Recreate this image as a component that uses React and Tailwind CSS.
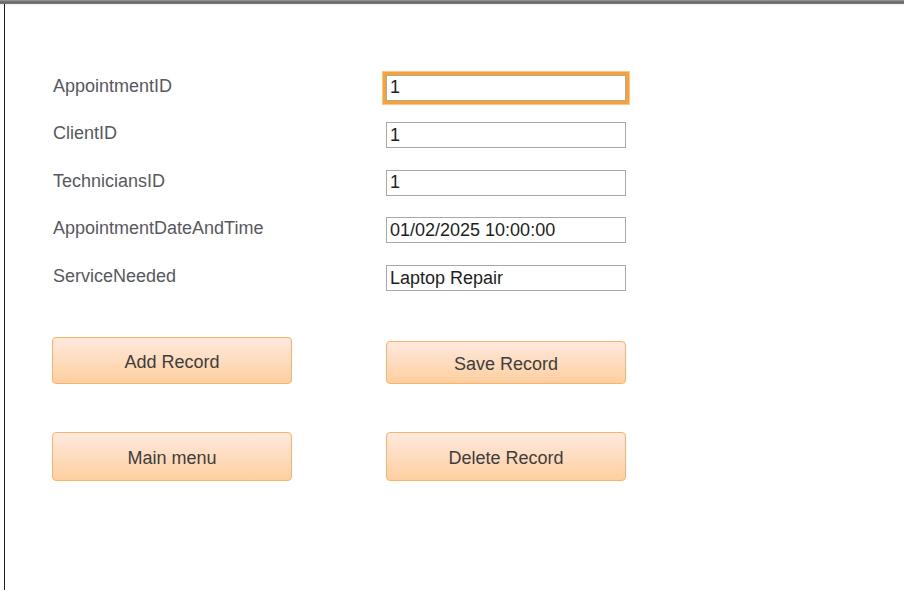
const fields = [
  { label: 'AppointmentID', value: '1', focused: true, h: 'h-[47px]' },
  { label: 'ClientID', value: '1', h: 'h-[48px]' },
  { label: 'TechniciansID', value: '1', h: 'h-[47px]' },
  { label: 'AppointmentDateAndTime', value: '01/02/2025 10:00:00', h: 'h-[48px]' },
  { label: 'ServiceNeeded', value: 'Laptop Repair', h: 'h-[48px]' },
];

function FormButton({ children, className = '' }) {
  return (
    <button
      type="button"
      className={`w-[240px] pt-[3px] rounded-[4px] border border-[#f8b36c] bg-gradient-to-b from-[#fee9dd] to-[#fecf9f] text-[18px] text-[#3d3d3d] ${className}`}
    >
      {children}
    </button>
  );
}

export default function App() {
  return (
    <div className="min-h-screen flex flex-col bg-white font-['Liberation_Sans',Arial,sans-serif]">
      {/* window top edge */}
      <div className="h-[4px] bg-gradient-to-b from-[#a0a0a0] via-[#666666] to-[#7c7c7c] shadow-[0_1px_3px_rgba(0,0,0,0.08)]" />

      <div className="flex-1 ml-[4px] border-l border-[#1c1c1c] pl-[47px] pt-[60px]">
        {fields.map((f) => (
          <div key={f.label} className={`flex items-center ${f.h}`}>
            <div className="w-[334px] pl-[1px] pb-[3px] text-[18px] text-[#585860]">{f.label}</div>
            <input
              readOnly
              value={f.value}
              className={`w-[240px] h-[26px] border border-[#a8a8a8] px-[3px] text-[18px] text-[#1e1e1e] outline-none ${
                f.focused ? 'shadow-[0_0_0_3px_#f7a233,0_0_0_4px_#fcc687]' : ''
              }`}
            />
          </div>
        ))}

        <div className="flex items-end mt-[35px]">
          <div className="w-[334px]">
            <FormButton className="h-[47px]">Add Record</FormButton>
          </div>
          <FormButton className="h-[43px]">Save Record</FormButton>
        </div>

        <div className="flex items-end mt-[48px]">
          <div className="w-[334px]">
            <FormButton className="h-[49px]">Main menu</FormButton>
          </div>
          <FormButton className="h-[49px]">Delete Record</FormButton>
        </div>
      </div>
    </div>
  );
}
